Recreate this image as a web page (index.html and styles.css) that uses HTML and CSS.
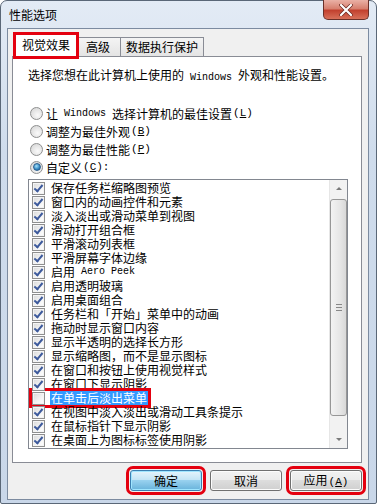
FILE: index.html
```html
<!DOCTYPE html>
<html lang="zh-CN">
<head>
  <meta charset="UTF-8" />
  <title>性能选项</title>
  <link rel="stylesheet" href="styles.css">
</head>
<body>
  <div class="window">
    <div class="titlebar">
      <span class="title">性能选项</span>
      <div class="close">
        <svg width="14" height="12" viewBox="0 0 14 12">
          <path d="M2 1 L12 11 M12 1 L2 11" stroke="#6b2a22" stroke-width="3.6" stroke-linecap="round"/>
          <path d="M2 1 L12 11 M12 1 L2 11" stroke="#fff" stroke-width="2.2" stroke-linecap="round"/>
        </svg>
      </div>
    </div>

    <div class="client">
      <div class="tabs">
        <div class="tab active">视觉效果</div>
        <div class="tab tab-adv">高级</div>
        <div class="tab tab-dep">数据执行保护</div>
      </div>

      <div class="panel">
        <p class="intro">选择您想在此计算机上使用的<span class="lat"> Windows </span>外观和性能设置。</p>

        <div class="radios">
          <div class="radio-row"><span class="radio"></span>让<span class="lat"> Windows </span>选择计算机的最佳设置<span class="mn">(<u>L</u>)</span></div>
          <div class="radio-row"><span class="radio"></span>调整为最佳外观<span class="mn">(<u>B</u>)</span></div>
          <div class="radio-row"><span class="radio"></span>调整为最佳性能<span class="mn">(<u>P</u>)</span></div>
          <div class="radio-row"><span class="radio on"></span>自定义<span class="mn">(<u>C</u>):</span></div>
        </div>

        <div class="listbox">
          <ul class="items">
            <li><span class="item"><span class="check on"></span>保存任务栏缩略图预览</span></li>
            <li><span class="item"><span class="check on"></span>窗口内的动画控件和元素</span></li>
            <li><span class="item"><span class="check on"></span>淡入淡出或滑动菜单到视图</span></li>
            <li><span class="item"><span class="check on"></span>滑动打开组合框</span></li>
            <li><span class="item"><span class="check on"></span>平滑滚动列表框</span></li>
            <li><span class="item"><span class="check on"></span>平滑屏幕字体边缘</span></li>
            <li><span class="item"><span class="check on"></span>启用<span class="lat"> Aero Peek</span></span></li>
            <li><span class="item"><span class="check on"></span>启用透明玻璃</span></li>
            <li><span class="item"><span class="check on"></span>启用桌面组合</span></li>
            <li><span class="item"><span class="check on"></span>任务栏和「开始」菜单中的动画</span></li>
            <li><span class="item"><span class="check on"></span>拖动时显示窗口内容</span></li>
            <li><span class="item"><span class="check on"></span>显示半透明的选择长方形</span></li>
            <li><span class="item"><span class="check on"></span>显示缩略图，而不是显示图标</span></li>
            <li><span class="item"><span class="check on"></span>在窗口和按钮上使用视觉样式</span></li>
            <li><span class="item"><span class="check on"></span>在窗口下显示阴影</span></li>
            <li><span class="item marked"><span class="check"></span><span class="sel">在单击后淡出菜单</span></span></li>
            <li><span class="item"><span class="check on"></span>在视图中淡入淡出或滑动工具条提示</span></li>
            <li><span class="item"><span class="check on"></span>在鼠标指针下显示阴影</span></li>
            <li><span class="item"><span class="check on"></span>在桌面上为图标标签使用阴影</span></li>
          </ul>
          <div class="scrollbar">
            <div class="arrow up"></div>
            <div class="thumb"><span class="grip"></span></div>
            <div class="track"></div>
            <div class="arrow down"></div>
          </div>
        </div>
      </div>

      <div class="buttons">
        <button class="btn default marked">确定</button>
        <button class="btn">取消</button>
        <button class="btn marked">应用<span class="mn">(<u>A</u>)</span></button>
      </div>
    </div>
  </div>
</body>
</html>
```

FILE: styles.css
```css
body {
  margin: 0;
  font-family: "Noto Sans CJK SC", sans-serif;
  font-size: 12px;
  color: #000;
}
.window {
  width: 377px;
  height: 504px;
  box-sizing: border-box;
  border: 1px solid #5a6777;
  border-radius: 7px 7px 2px 2px;
  background: linear-gradient(to bottom, #e3ebf5 0%, #cfdcec 30%, #c9d7e9 100%);
  padding: 0 7px 3px 6px;
  display: flex;
  flex-direction: column;
}
.titlebar {
  height: 27px;
  display: flex;
  align-items: flex-start;
}
.title {
  padding: 5px 0 0 2px;
  line-height: 18px;
  font-size: 12px;
}
.close {
  margin-left: auto;
  margin-top: -1px;
  width: 44px;
  height: 19px;
  border: 1px solid #6a3029;
  border-top: none;
  border-radius: 0 0 5px 5px;
  background: linear-gradient(to bottom, #eab1a6 0%, #d7806f 45%, #c2412f 55%, #d8705a 100%);
  display: flex;
  align-items: center;
  justify-content: center;
}
.client {
  flex: 1;
  background: #f0f0f0;
  border: 1px solid #7c8ba0;
  display: flex;
  flex-direction: column;
}
.tabs {
  height: 27px;
  display: flex;
  align-items: flex-end;
  padding-left: 7px;
  position: relative;
  z-index: 1;
}
.tab {
  box-sizing: border-box;
  height: 19px;
  border: 1px solid #898c95;
  border-bottom: none;
  background: linear-gradient(to bottom, #f4f4f4, #e4e4e4);
  line-height: 17px;
  text-align: center;
}
.tab.active {
  height: 23px;
  width: 62px;
  background: #fff;
  margin-bottom: -1px;
  line-height: 20px;
  outline: 3px solid #e4000f;
  outline-offset: -1px;
  position: relative;
  z-index: 2;
}
.tab-adv {
  width: 45px;
  margin-left: -1px;
  border-left: none;
}
.tab-dep {
  width: 84px;
  margin-left: -1px;
}
.panel {
  margin: 0 6px 0 4px;
  height: 407px;
  box-sizing: border-box;
  border: 1px solid #898c95;
  background: #fff;
  padding: 10px 12px 0 15px;
}
.lat {
  font-family: "Liberation Mono", monospace;
  font-size: 10px;
  white-space: pre;
}
.mn {
  font-family: "Liberation Mono", monospace;
  font-size: 11px;
  margin-left: 1px;
}
.intro {
  margin: 0;
  line-height: 16px;
}
.radios {
  margin-top: 18px;
}
.radio-row {
  height: 18px;
  display: flex;
  align-items: center;
}
.radio {
  width: 11px;
  height: 11px;
  border: 1px solid #8e8f8f;
  border-radius: 50%;
  background: radial-gradient(circle at 60% 65%, #fafafa 0%, #dedede 70%, #cfcfcf 100%);
  margin: 0 3px 0 2px;
  display: flex;
  align-items: center;
  justify-content: center;
}
.radio.on::after {
  content: "";
  width: 6px;
  height: 6px;
  border-radius: 50%;
  background: radial-gradient(circle at 40% 35%, #a5e1fb 0%, #3b8fc6 55%, #0b4c85 100%);
  border: 1px solid #2c5f8f;
}
.listbox {
  margin-top: 3px;
  width: 320px;
  height: 270px;
  box-sizing: border-box;
  border: 1px solid #828790;
  display: flex;
}
.items {
  flex: 1;
  list-style: none;
  margin: 0;
  padding: 1px 0 0 3px;
}
.items li {
  height: 14px;
  line-height: 14px;
}
.item {
  display: inline-flex;
  align-items: center;
  height: 14px;
}
.item.marked {
  outline: 3px solid #e4000f;
  outline-offset: 0;
}
.check {
  width: 11px;
  height: 11px;
  border: 1px solid #8f8f8f;
  background: linear-gradient(135deg, #d8d8d8 0%, #f5f5f5 60%, #fff 100%);
  box-shadow: inset 0 0 0 1px #f4f4f4;
  margin-right: 6px;
  position: relative;
}
.check.on::after {
  content: "";
  position: absolute;
  left: 3px;
  top: 0;
  width: 3px;
  height: 7px;
  border: solid #3d5a9c;
  border-width: 0 2px 2px 0;
  transform: rotate(40deg);
}
.sel {
  background: #3399ff;
  color: #fff;
  padding: 0 1px;
  margin-left: -1px;
}
.scrollbar {
  width: 17px;
  background: #f2f2f2;
  border-left: 1px solid #e6e6e6;
  display: flex;
  flex-direction: column;
}
.arrow {
  height: 17px;
  display: flex;
  align-items: center;
  justify-content: center;
}
.arrow::after {
  content: "";
  border-left: 3px solid transparent;
  border-right: 3px solid transparent;
}
.arrow.up::after {
  border-bottom: 3px solid #7a7a7a;
}
.arrow.down::after {
  border-top: 3px solid #7a7a7a;
}
.thumb {
  margin: 2px 0 0 0;
  height: 217px;
  box-sizing: border-box;
  border: 1px solid #979797;
  border-radius: 3px;
  background: linear-gradient(to right, #f3f3f3, #e6e6e6 60%, #d8d8d8);
  display: flex;
  align-items: center;
  justify-content: center;
}
.grip {
  width: 6px;
  height: 5px;
  border-top: 1px solid #888;
  border-bottom: 1px solid #888;
  background: linear-gradient(to bottom, transparent 2px, #888 2px, #888 3px, transparent 3px);
}
.track {
  flex: 1;
}
.buttons {
  display: flex;
  justify-content: flex-end;
  gap: 8px;
  padding: 7px 6px 0 0;
}
.btn {
  width: 72px;
  height: 21px;
  padding: 0;
  font-family: "Noto Sans CJK SC", sans-serif;
  font-size: 12px;
  line-height: 18px;
  color: #000;
  border: 1px solid #707070;
  border-radius: 3px;
  background: linear-gradient(to bottom, #f2f2f2 0%, #ebebeb 45%, #dddddd 50%, #cfcfcf 100%);
  box-shadow: inset 0 0 0 1px #fcfcfc;
}
.btn.default {
  border-color: #3c7fb1;
  background: linear-gradient(to bottom, #e5f4fc 0%, #c4e5f6 45%, #98d1ef 50%, #68b3db 100%);
  box-shadow: inset 0 0 0 1px #9fe5ff;
}
.btn.marked {
  outline: 3px solid #e4000f;
  outline-offset: 1px;
}
```
